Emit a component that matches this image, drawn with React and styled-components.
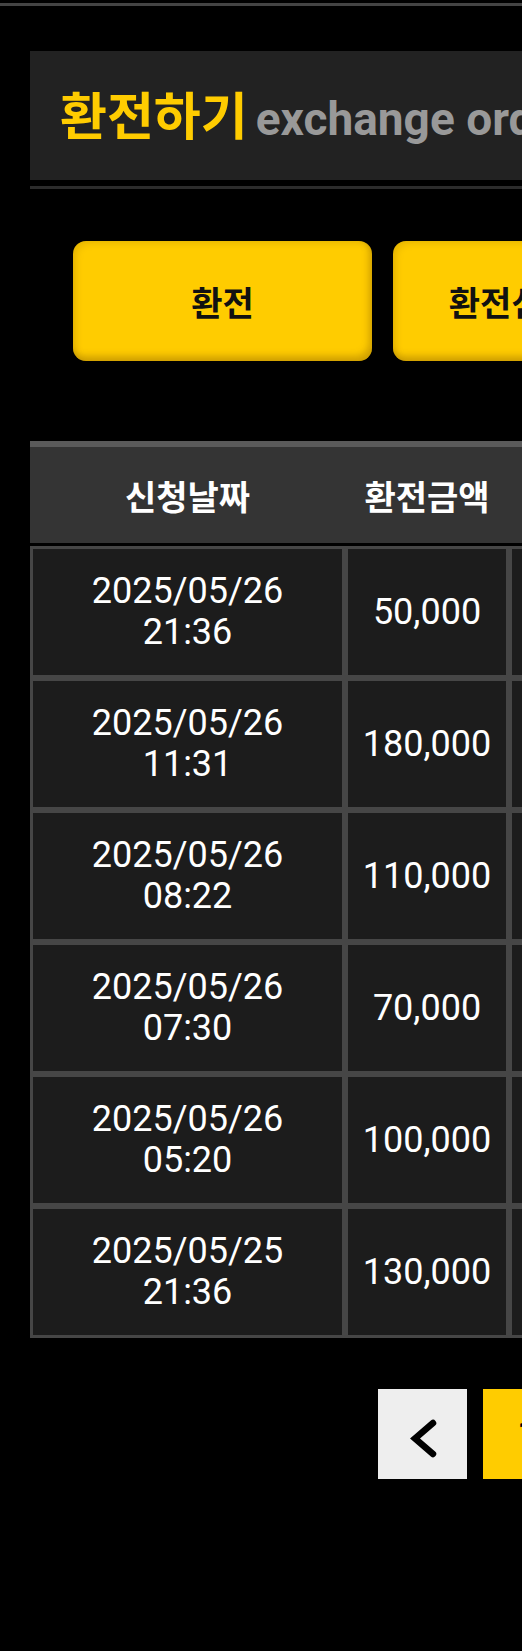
import React from "react";
import styled, { createGlobalStyle } from "styled-components";

const GlobalStyle = createGlobalStyle`
  html, body {
    margin: 0;
    padding: 0;
    background: #000;
    overflow-x: hidden;
  }
  body {
    font-family: Roboto, "Noto Sans CJK KR", sans-serif;
    color: #fff;
    min-height: 100vh;
  }
  * { box-sizing: border-box; }
`;

const Page = styled.div`
  min-height: 1651px;
  background: #000;
`;

const TopLine = styled.div`
  height: 3px;
  margin-top: 3px;
  background: #444;
`;

const Content = styled.main`
  width: 995px;
  margin-left: 30px;
  padding-top: 45px;
`;

const TitlePanel = styled.header`
  height: 129px;
  background: #222;
  display: flex;
  align-items: center;
  padding-left: 30px;
  padding-top: 4px;
  white-space: nowrap;
`;

const Title = styled.h1`
  margin: 0;
  font-family: Roboto, "Noto Sans CJK KR", sans-serif;
  font-weight: 700;
  font-size: 51px;
  line-height: 1;
  color: #ffcc00;
  display: flex;
  align-items: baseline;
`;

const SubTitle = styled.span`
  margin-left: 8px;
  font-family: Roboto, sans-serif;
  font-weight: 700;
  font-size: 46px;
  color: #999;
`;

const Divider = styled.div`
  margin-top: 6px;
  height: 3px;
  background: #2c2c2c;
`;

const ButtonRow = styled.nav`
  margin-top: 52px;
  padding-left: 43px;
  display: flex;
  gap: 21px;
`;

const TabButton = styled.button`
  width: 299px;
  height: 120px;
  flex: none;
  border: none;
  border-radius: 13px;
  background: #ffcc00;
  box-shadow: inset -3px -5px 7px rgba(120, 80, 0, 0.35),
    inset 4px 3px 6px rgba(150, 110, 0, 0.18);
  font-family: "Noto Sans CJK KR", sans-serif;
  font-weight: 700;
  font-size: 34px;
  color: #111;
  display: flex;
  align-items: center;
  justify-content: center;
  white-space: nowrap;
  padding: 0;
`;

const Table = styled.table`
  margin-top: 80px;
  width: 100%;
  border-collapse: separate;
  border-spacing: 0;
  table-layout: fixed;
`;

const Th = styled.th`
  height: 105px;
  background: #343434;
  border-top: 6px solid #5a5a5a;
  border-bottom: 3px solid #000;
  font-family: "Noto Sans CJK KR", sans-serif;
  font-weight: 700;
  font-size: 34px;
  color: #fff;
  text-align: center;
  padding: 0;
  white-space: nowrap;
`;

const Td = styled.td`
  height: 132px;
  padding: 0;
  background: #1c1c1c;
  border: 3px solid #464646;
  text-align: center;
  vertical-align: middle;
  font-family: Roboto, sans-serif;
  font-size: 36px;
  line-height: 41px;
  color: #fff;
`;

const Pagination = styled.div`
  margin-top: 51px;
  display: flex;
  justify-content: center;
  gap: 16px;
`;

const PageButton = styled.button`
  width: 89px;
  height: 90px;
  border: none;
  padding: 0;
  background: ${(p) => (p.$active ? "#ffcc00" : "#eeeeee")};
  color: #000;
  font-family: Roboto, sans-serif;
  font-size: 36px;
  font-weight: 500;
  display: flex;
  align-items: center;
  justify-content: center;
`;

const rows = [
  ["2025/05/26", "21:36", "50,000"],
  ["2025/05/26", "11:31", "180,000"],
  ["2025/05/26", "08:22", "110,000"],
  ["2025/05/26", "07:30", "70,000"],
  ["2025/05/26", "05:20", "100,000"],
  ["2025/05/25", "21:36", "130,000"],
];

const Chevron = ({ dir }) => (
  <svg width="89" height="90" viewBox="0 0 89 90">
    <polyline
      points={dir === "left" ? "55,34 37,49.5 55,65" : "34,34 52,49.5 34,65"}
      fill="none"
      stroke="#000"
      strokeWidth="6.5"
      strokeLinecap="round"
      strokeLinejoin="miter"
    />
  </svg>
);

export default function App() {
  return (
    <Page>
      <GlobalStyle />
      <TopLine />
      <Content>
        <TitlePanel>
          <Title>
            환전하기<SubTitle>exchange order</SubTitle>
          </Title>
        </TitlePanel>
        <Divider />
        <ButtonRow>
          <TabButton>환전</TabButton>
          <TabButton>환전신청내역</TabButton>
        </ButtonRow>
        <Table>
          <colgroup>
            <col style={{ width: 315 }} />
            <col style={{ width: 164 }} />
            <col />
            <col />
          </colgroup>
          <thead>
            <tr>
              <Th>신청날짜</Th>
              <Th>환전금액</Th>
              <Th>처리상태</Th>
              <Th>처리날짜</Th>
            </tr>
          </thead>
          <tbody>
            {rows.map((r, i) => (
              <tr key={i}>
                <Td>
                  {r[0]}
                  <br />
                  {r[1]}
                </Td>
                <Td>{r[2]}</Td>
                <Td>완료</Td>
                <Td>
                  {r[0]}
                  <br />
                  {r[1]}
                </Td>
              </tr>
            ))}
          </tbody>
        </Table>
        <Pagination>
          <PageButton aria-label="이전">
            <Chevron dir="left" />
          </PageButton>
          <PageButton $active>1</PageButton>
          <PageButton aria-label="다음">
            <Chevron dir="right" />
          </PageButton>
        </Pagination>
      </Content>
    </Page>
  );
}
